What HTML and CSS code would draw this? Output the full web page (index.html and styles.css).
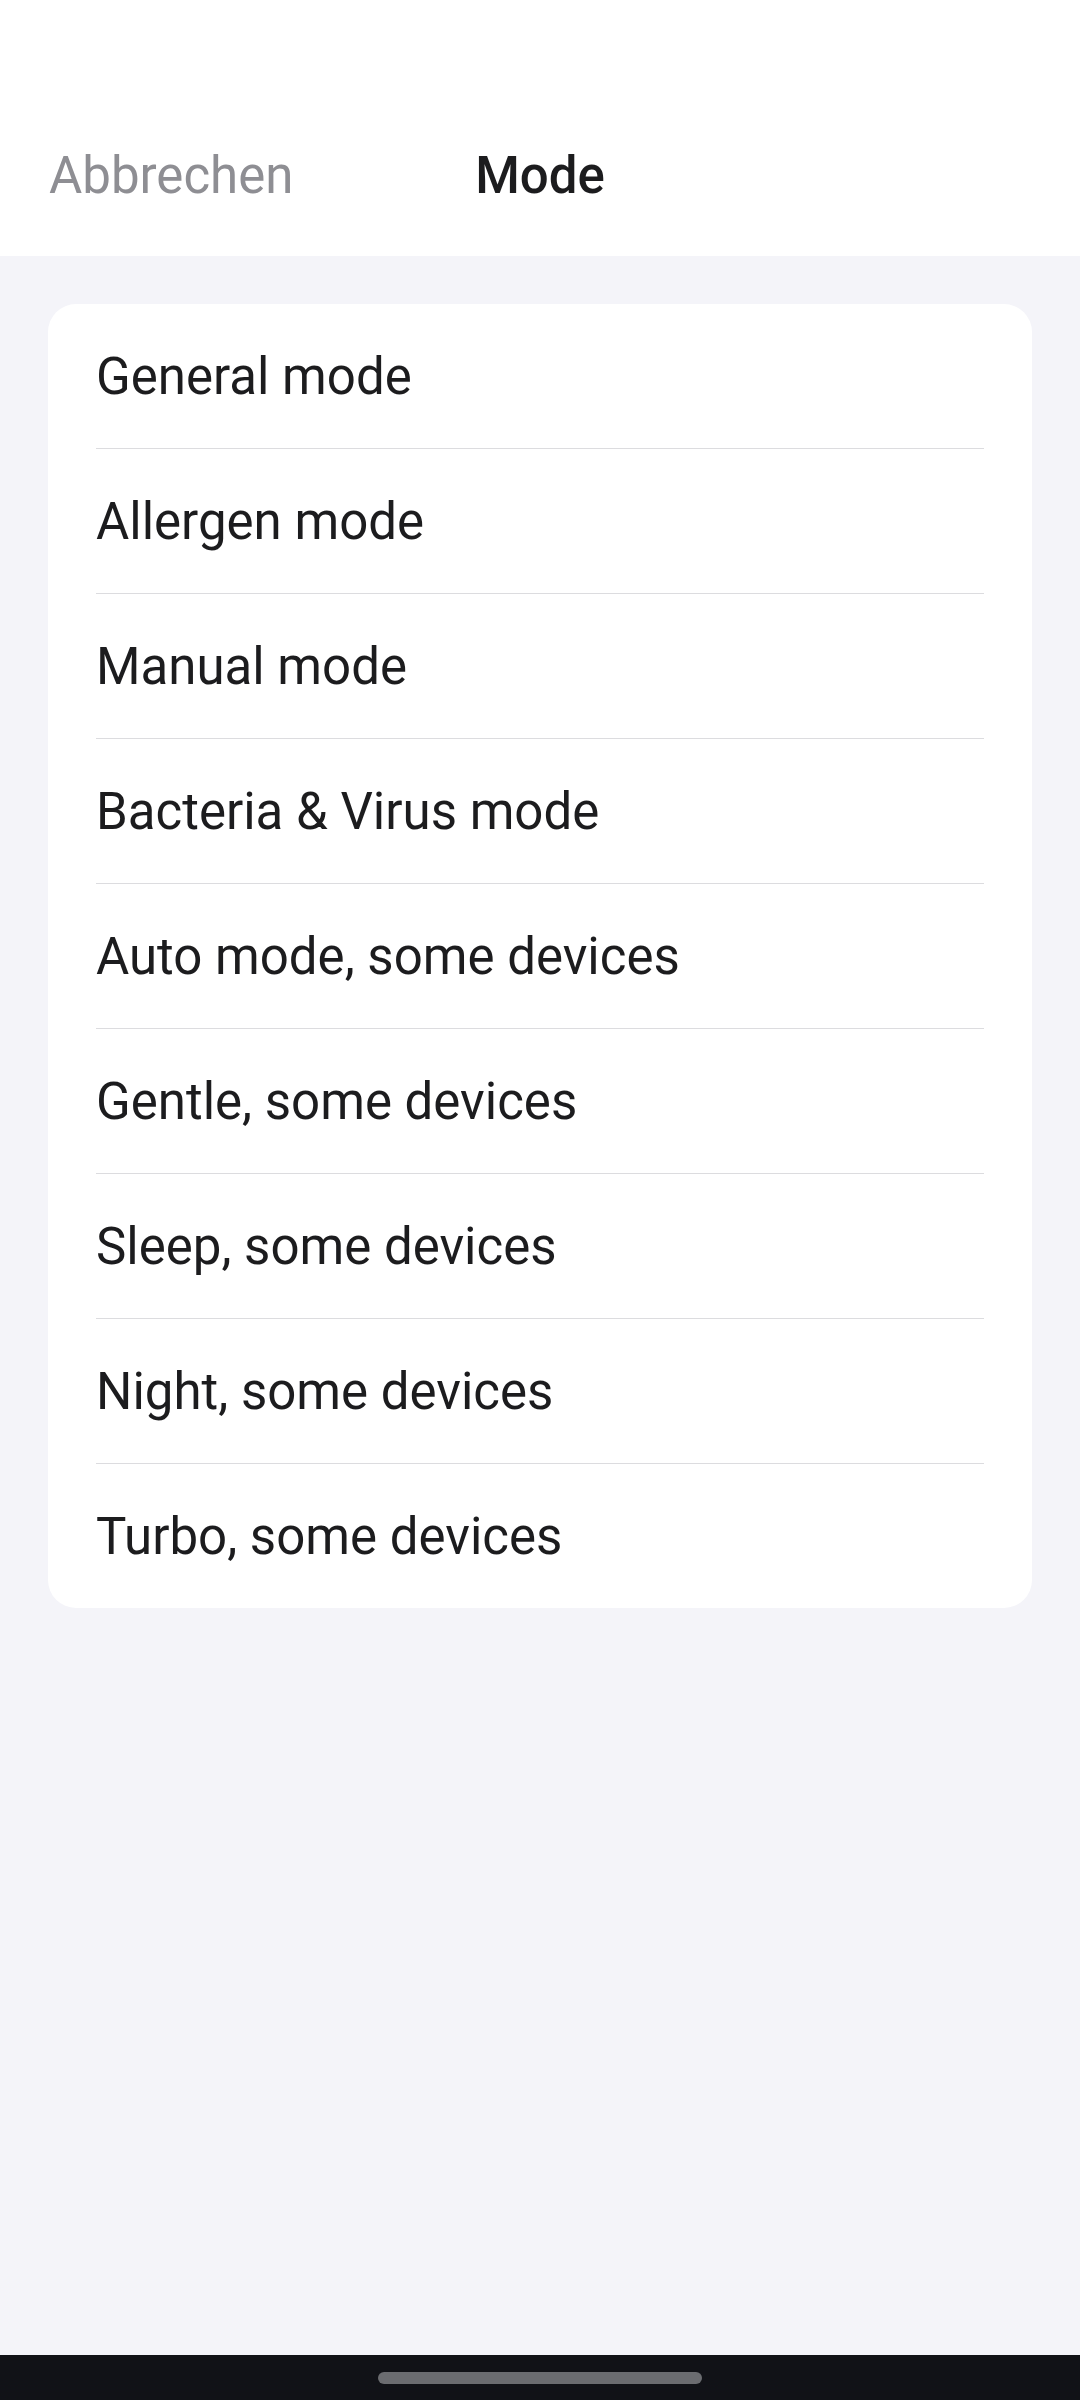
FILE: index.html
```html
<!DOCTYPE html>
<html lang="de">
<head>
    <meta charset="UTF-8">
    <meta name="viewport" content="width=device-width, initial-scale=1.0">
    <title>Mode</title>
    <link rel="stylesheet" href="styles.css">
</head>
<body>
    <div class="screen">
        <header class="top-bar">
            <span class="cancel">Abbrechen</span>
            <h1 class="title">Mode</h1>
            <span></span>
        </header>

        <main class="content">
            <ul class="mode-list">
                <li>General mode</li>
                <li>Allergen mode</li>
                <li>Manual mode</li>
                <li>Bacteria &amp; Virus mode</li>
                <li>Auto mode, some devices</li>
                <li>Gentle, some devices</li>
                <li>Sleep, some devices</li>
                <li>Night, some devices</li>
                <li>Turbo, some devices</li>
            </ul>
        </main>

        <div class="nav-bar">
            <div class="handle"></div>
        </div>
    </div>
</body>
</html>
```

FILE: styles.css
```css
* {
    box-sizing: border-box;
}
html, body {
    margin: 0;
    padding: 0;
    height: 100%;
}
body {
    font-family: Roboto, "Noto Sans", Arial, sans-serif;
    background-color: #f4f4f9;
    color: #1c1c1e;
}
.screen {
    display: flex;
    flex-direction: column;
    height: 2400px;
}
.top-bar {
    display: grid;
    grid-template-columns: 1fr auto 1fr;
    align-items: center;
    height: 256px;
    padding: 94px 49px 0;
    background-color: #fff;
}
.cancel {
    font-size: 51px;
    color: #8e8e93;
}
.title {
    margin: 0;
    font-size: 51px;
    font-weight: 500;
    color: #1c1c1e;
}
.content {
    flex: 1;
    padding: 48px;
}
.mode-list {
    list-style: none;
    margin: 0;
    padding: 0 48px;
    background-color: #fff;
    border-radius: 28px;
}
.mode-list li {
    height: 145px;
    display: flex;
    align-items: center;
    font-size: 51px;
    border-bottom: 1px solid #dcdcdf;
}
.mode-list li:last-child {
    height: 144px;
    border-bottom: none;
}
.nav-bar {
    height: 45px;
    background-color: #111217;
    display: flex;
    justify-content: center;
    padding-top: 17px;
}
.handle {
    width: 324px;
    height: 12px;
    border-radius: 6px;
    background-color: #6b6c70;
}
```
